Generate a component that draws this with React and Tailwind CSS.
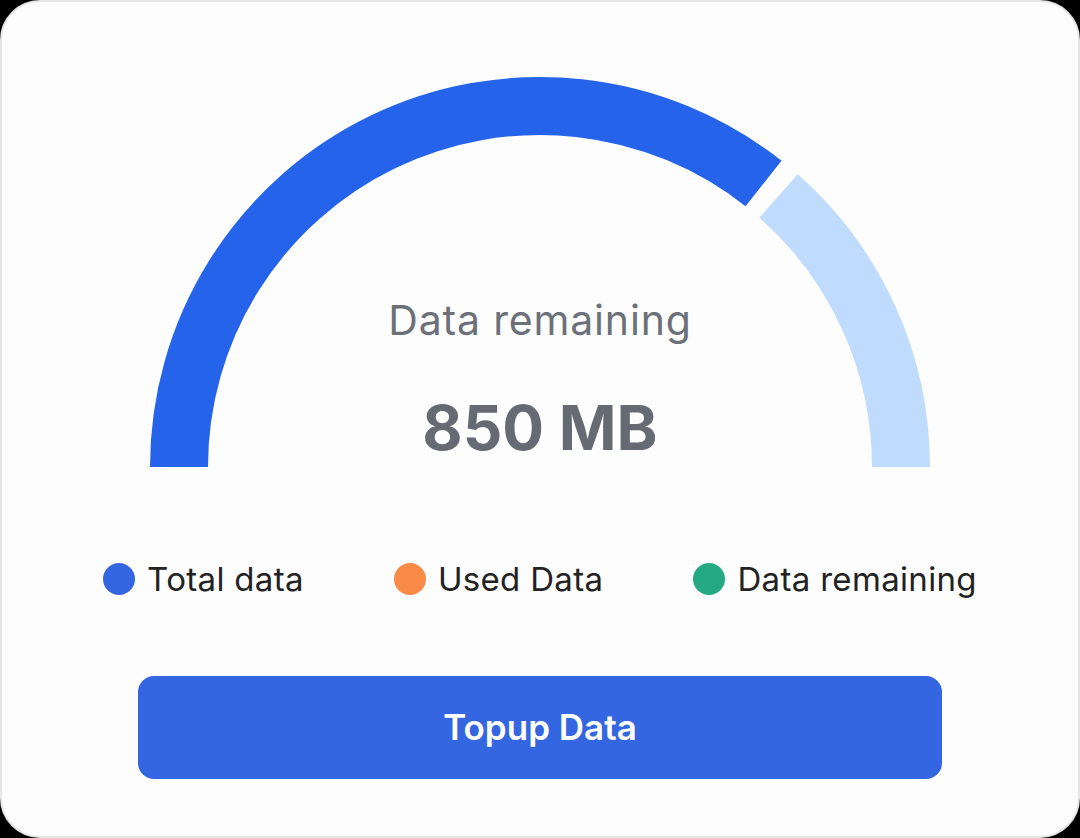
import React from "react";

function Gauge() {
  return (
    <div className="relative mx-auto h-[391px] w-[780px]">
      <svg width="780" height="391" viewBox="0 0 780 391" className="absolute inset-0">
        <path d="M 29 391 A 361 361 0 0 1 613.5 107.5" fill="none" stroke="#2563eb" strokeWidth="58" />
        <path d="M 628.5 120 A 361 361 0 0 1 751 391" fill="none" stroke="#bfdbfe" strokeWidth="58" />
      </svg>
      <div className="absolute inset-x-0 top-[219px] flex flex-col items-center">
        <div className="text-[41px] leading-[50px] tracking-[0.02em] text-[#6b7079]">Data remaining</div>
        <div className="mt-[52px] text-[62px] font-bold leading-[62px] text-[#656a73]">850 MB</div>
      </div>
    </div>
  );
}

export default function App() {
  return (
    <div className="h-[838px] w-[1080px] bg-black" style={{ fontFamily: "Inter, 'Noto Sans', sans-serif" }}>
      <div className="h-[838px] w-[1080px] rounded-[40px] border-2 border-[#e6e6e6] bg-[#fdfdfd] pt-[74px]">
        <Gauge />
        <div className="mt-[92px] flex items-center justify-center gap-[90px]">
          <div className="flex items-center gap-3">
            <span className="h-8 w-8 rounded-full bg-[#3366e0]" />
            <span className="text-[33px] leading-[40px] tracking-[0.01em] text-[#222222]">Total data</span>
          </div>
          <div className="flex items-center gap-3">
            <span className="h-8 w-8 rounded-full bg-[#f98a48]" />
            <span className="text-[33px] leading-[40px] tracking-[0.01em] text-[#222222]">Used Data</span>
          </div>
          <div className="flex items-center gap-3">
            <span className="h-8 w-8 rounded-full bg-[#24a983]" />
            <span className="text-[33px] leading-[40px] tracking-[0.01em] text-[#222222]">Data remaining</span>
          </div>
        </div>
        <div className="mt-[77px] flex justify-center">
          <button className="flex h-[103px] w-[804px] items-center justify-center rounded-[16px] bg-[#3366e0] text-[35px] font-semibold text-white">
            Topup Data
          </button>
        </div>
      </div>
    </div>
  );
}
